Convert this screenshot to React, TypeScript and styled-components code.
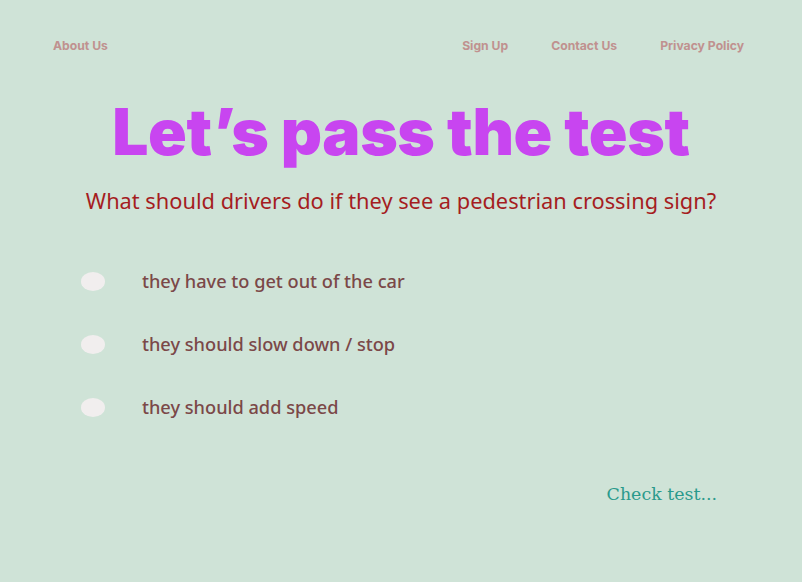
import React from "react";
import styled, { createGlobalStyle } from "styled-components";

const Global = createGlobalStyle`
  html, body { margin: 0; padding: 0; background: #cfe3d7; }
  body { width: 802px; height: 582px; overflow: hidden; }
`;

const Page = styled.div`
  width: 802px;
  height: 582px;
  box-sizing: border-box;
  background: #cfe3d7;
  display: flex;
  flex-direction: column;
`;

const Nav = styled.nav`
  display: flex;
  align-items: center;
  padding: 38px 58px 0 53px;
  height: 15px;
`;

const NavLink = styled.a<{ $gap?: number }>`
  font-family: Inter, "Liberation Sans", sans-serif;
  font-weight: 700;
  font-size: 12.2px;
  color: #c0918f;
  text-decoration: none;
  margin-left: ${(p) => (p.$gap ? `${p.$gap}px` : "0")};
`;

const Spacer = styled.div`
  flex: 1;
`;

const Title = styled.h1`
  margin: 40px 0 0;
  text-align: center;
  font-family: Inter, "Liberation Sans", sans-serif;
  font-weight: 900;
  font-size: 64px;
  line-height: 78px;
  letter-spacing: -0.4px;
  color: #c845f0;
`;

const Question = styled.p`
  margin: 15px 0 0;
  text-align: center;
  font-family: "Noto Sans", sans-serif;
  font-size: 21.8px;
  line-height: 30px;
  color: #a51d1f;
`;

const Options = styled.div`
  display: flex;
  flex-direction: column;
  gap: 33px;
  margin-top: 50px;
  padding-left: 81px;
`;

const Option = styled.label`
  display: flex;
  align-items: center;
  height: 30px;
`;

const Radio = styled.span`
  width: 24px;
  height: 19px;
  border-radius: 50%;
  background: #f1eeee;
  margin-right: 37px;
  flex: none;
`;

const OptionText = styled.span`
  font-family: "Noto Sans", sans-serif;
  font-weight: 500;
  font-size: 18.2px;
  color: #7b4848;
`;

const Footer = styled.div`
  display: flex;
  justify-content: flex-end;
  padding-right: 85px;
  margin-top: 62px;
`;

const CheckLink = styled.a`
  font-family: "DejaVu Serif", "Liberation Serif", serif;
  font-size: 17.4px;
  color: #2a9a8c;
  text-decoration: none;
`;

const options = [
  "they have to get out of the car",
  "they should slow down / stop",
  "they should add speed",
];

export default function App() {
  return (
    <Page>
      <Global />
      <Nav>
        <NavLink>About Us</NavLink>
        <Spacer />
        <NavLink>Sign Up</NavLink>
        <NavLink $gap={43}>Contact Us</NavLink>
        <NavLink $gap={43}>Privacy Policy</NavLink>
      </Nav>
      <Title>Let’s pass the test</Title>
      <Question>What should drivers do if they see a pedestrian crossing sign?</Question>
      <Options>
        {options.map((o) => (
          <Option key={o}>
            <Radio />
            <OptionText>{o}</OptionText>
          </Option>
        ))}
      </Options>
      <Footer>
        <CheckLink>Check test...</CheckLink>
      </Footer>
    </Page>
  );
}
